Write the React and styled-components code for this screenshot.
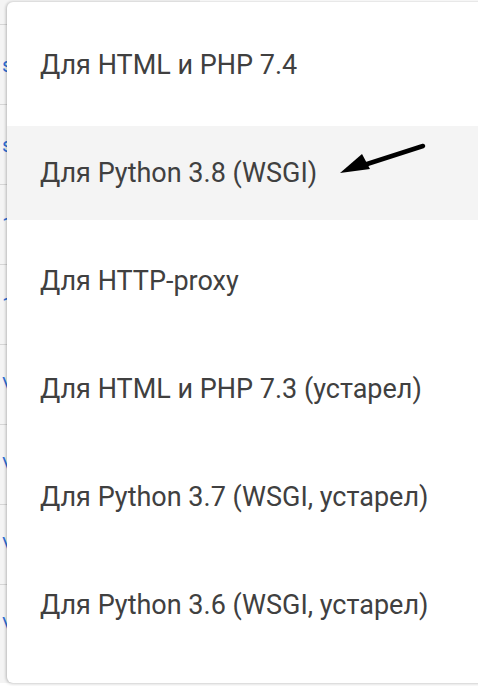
import React from "react";
import styled, { createGlobalStyle } from "styled-components";

const GlobalStyle = createGlobalStyle`
	html, body {
		margin: 0;
		padding: 0;
		background: #ffffff;
		overflow: hidden;
	}
	body {
		font-family: Roboto, "Noto Sans", sans-serif;
	}
`;

const Screen = styled.div`
	position: relative;
	width: 478px;
	height: 686px;
	overflow: hidden;
	background: #ffffff;
`;

const Table = styled.div`
	display: flex;
	flex-direction: column;
	padding-top: 24px;
	width: 200px;
	background: #f4f4f4;
	height: 659px;
`;

const TableRow = styled.div`
	height: 79px;
	border-top: 1px solid #d6d6d6;
	display: flex;
	align-items: center;
	padding-left: 2px;
	font-size: 21px;
	color: #2f6fd6;
`;

const Menu = styled.ul`
	position: absolute;
	top: 2px;
	left: 7px;
	width: 520px;
	height: 681px;
	box-sizing: border-box;
	margin: 0;
	padding: 16px 0 0;
	list-style: none;
	background: #ffffff;
	border-radius: 6px;
	box-shadow: -1px 0 3px rgba(0, 0, 0, 0.18), 0 1px 4px rgba(0, 0, 0, 0.12);
	display: flex;
	flex-direction: column;
	gap: 14px;
`;

const Item = styled.li`
	position: relative;
	height: 94px;
	flex-shrink: 0;
	display: flex;
	align-items: center;
	padding-left: 33px;
	font-family: Roboto, "Noto Sans", sans-serif;
	font-size: 27px;
	color: #404040;
	background: ${({ $active }) => ($active ? "#f4f4f4" : "transparent")};
`;

const Pointer = styled.svg`
	position: absolute;
	left: 327px;
	top: 14px;
`;

const items = [
	"Для HTML и PHP 7.4",
	"Для Python 3.8 (WSGI)",
	"Для HTTP-proxy",
	"Для HTML и PHP 7.3 (устарел)",
	"Для Python 3.7 (WSGI, устарел)",
	"Для Python 3.6 (WSGI, устарел)",
];

const rows = ["s", "s", "1", "1", "\\", "\\", "\\", "\\"];

const App = () => {
	return (
		<>
			<GlobalStyle />
			<Screen>
				<Table>
					{rows.map((r, i) => (
						<TableRow key={i}>{r}</TableRow>
					))}
				</Table>
				<Menu>
					{items.map((label, i) => (
						<Item key={label} $active={i === 1}>
							{label}
							{i === 1 && (
								<Pointer width="100" height="40" viewBox="0 0 100 40">
									<path
										d="M89 6 L30 25"
										stroke="#000"
										strokeWidth="4.5"
										strokeLinecap="round"
									/>
									<path d="M6 33 L28 14 L36 29 Z" fill="#000" />
								</Pointer>
							)}
						</Item>
					))}
				</Menu>
			</Screen>
		</>
	);
};

export default App;
